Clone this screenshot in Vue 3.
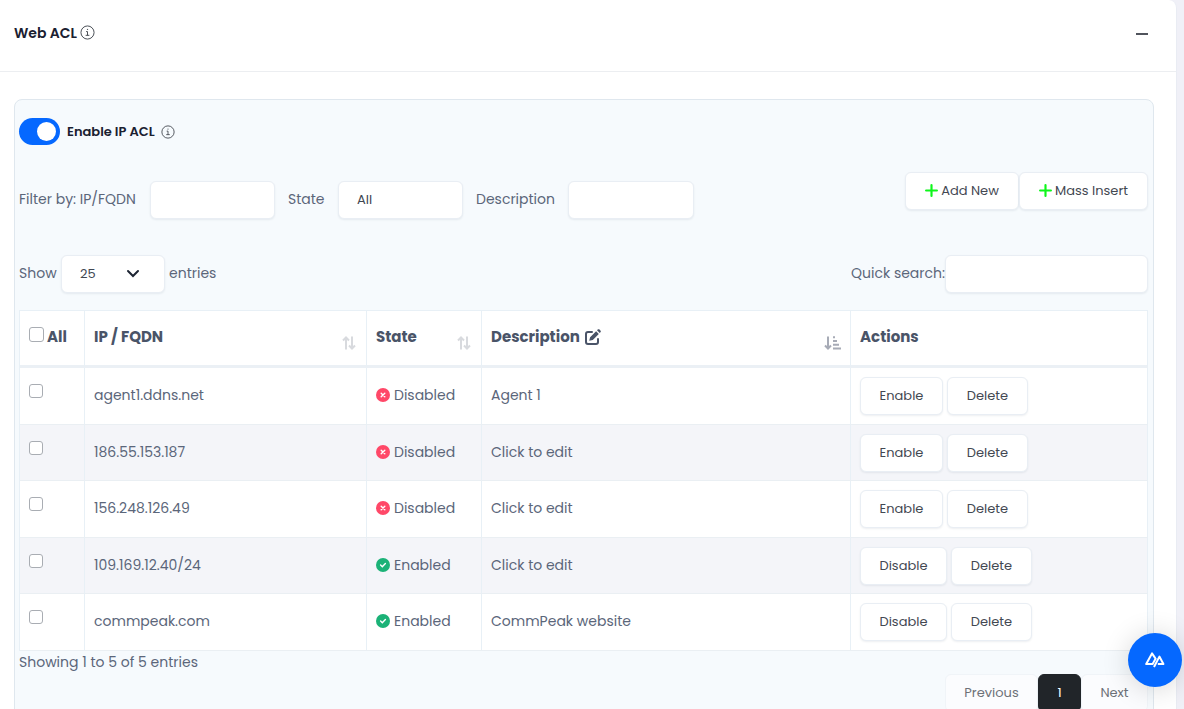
<script setup>
import { ref } from 'vue'

const aclEnabled = ref(true)
const pageSize = ref('25')
const filterIp = ref('')
const filterState = ref('All')
const filterDescription = ref('')
const quickSearch = ref('')
const selected = ref([])

const rows = [
  { ip: 'agent1.ddns.net', enabled: false, description: 'Agent 1' },
  { ip: '186.55.153.187', enabled: false, description: 'Click to edit' },
  { ip: '156.248.126.49', enabled: false, description: 'Click to edit' },
  { ip: '109.169.12.40/24', enabled: true, description: 'Click to edit' },
  { ip: 'commpeak.com', enabled: true, description: 'CommPeak website' },
]

function toggleAll(event) {
  selected.value = event.target.checked ? rows.map((row) => row.ip) : []
}
</script>

<template>
  <div class="page">
    <section class="card">
      <header class="card-head">
        <h1>Web ACL</h1>
        <svg class="info" viewBox="0 0 16 16" aria-hidden="true">
          <circle cx="8" cy="8" r="7" />
          <path d="M6.5 7H8v4M6 11h4M7.4 4.7h1.2" />
        </svg>
        <button class="collapse" type="button" aria-label="Collapse"><span></span></button>
      </header>

      <div class="card-body">
        <div class="panel">
          <div class="enable">
            <input id="acl" v-model="aclEnabled" class="switch" type="checkbox" role="switch" />
            <label for="acl">Enable IP ACL</label>
            <svg class="info small" viewBox="0 0 16 16" aria-hidden="true">
              <circle cx="8" cy="8" r="7" />
              <path d="M6.5 7H8v4M6 11h4M7.4 4.7h1.2" />
            </svg>
          </div>

          <div class="toolbar">
            <form class="filters" @submit.prevent>
              <label for="f-ip">Filter by: IP/FQDN</label>
              <input id="f-ip" v-model="filterIp" class="field" type="text" />
              <label for="f-state">State</label>
              <select id="f-state" v-model="filterState" class="field">
                <option>All</option>
                <option>Enabled</option>
                <option>Disabled</option>
              </select>
              <label for="f-desc">Description</label>
              <input id="f-desc" v-model="filterDescription" class="field" type="text" />
            </form>
            <div class="add-buttons">
              <button class="btn add" type="button">
                <svg class="plus" viewBox="0 0 12 12" aria-hidden="true"><path d="M6 1v10M1 6h10" /></svg>Add New
              </button>
              <button class="btn mass" type="button">
                <svg class="plus" viewBox="0 0 12 12" aria-hidden="true"><path d="M6 1v10M1 6h10" /></svg>Mass Insert
              </button>
            </div>
          </div>

          <div class="listing">
            <div class="length">
              <label for="size">Show</label>
              <span class="select-wrap">
                <select id="size" v-model="pageSize" class="field">
                  <option>10</option>
                  <option>25</option>
                  <option>50</option>
                </select>
                <svg class="chevron" viewBox="0 0 14 10" aria-hidden="true"><path d="M2 2l5 5 5-5" /></svg>
              </span>
              <span class="unit">entries</span>
            </div>
            <div class="search">
              <label for="quick">Quick search:</label>
              <input id="quick" v-model="quickSearch" class="field" type="search" />
            </div>
          </div>

          <table>
            <colgroup>
              <col class="c-check" />
              <col class="c-ip" />
              <col class="c-state" />
              <col />
              <col class="c-actions" />
            </colgroup>
            <thead>
              <tr>
                <th>
                  <div class="th">
                    <input id="all" class="check large" type="checkbox" @change="toggleAll" />
                    <label for="all">All</label>
                  </div>
                </th>
                <th>
                  <div class="th">
                    <span>IP / FQDN</span>
                    <svg class="sort" viewBox="0 0 14 14" aria-hidden="true">
                      <path d="M4 13.5V1.5M1 4.5l3-3 3 3M10 .5v12M7 9.5l3 3 3-3" />
                    </svg>
                  </div>
                </th>
                <th>
                  <div class="th">
                    <span>State</span>
                    <svg class="sort" viewBox="0 0 14 14" aria-hidden="true">
                      <path d="M4 13.5V1.5M1 4.5l3-3 3 3M10 .5v12M7 9.5l3 3 3-3" />
                    </svg>
                  </div>
                </th>
                <th>
                  <div class="th">
                    <span>Description</span>
                    <svg class="edit" viewBox="0 0 16 16" aria-hidden="true">
                      <path class="line" d="M7 3H3a2 2 0 0 0-2 2v8a2 2 0 0 0 2 2h8a2 2 0 0 0 2-2v-3" />
                      <path class="solid" d="M11.1 2.2l2.7 2.7-6 6-3.6.9.9-3.6zM12 1.3l.7-.7c.5-.6 1.3-.6 1.8 0l.9.9c.6.5.6 1.3 0 1.8l-.7.7z" />
                    </svg>
                    <svg class="sort active" viewBox="0 0 17 14" aria-hidden="true">
                      <path d="M4 .5v12M1 9.5l3 3 3-3M9 1.2h2M9 5h4M9 8.8h6M9 12.6h8" />
                    </svg>
                  </div>
                </th>
                <th><div class="th">Actions</div></th>
              </tr>
            </thead>
            <tbody>
              <tr v-for="row in rows" :key="row.ip">
                <td class="pick">
                  <input v-model="selected" class="check" type="checkbox" :value="row.ip" :aria-label="row.ip" />
                </td>
                <td>{{ row.ip }}</td>
                <td>
                  <div class="status">
                    <svg v-if="row.enabled" class="dot on" viewBox="0 0 14 14" aria-hidden="true">
                      <circle cx="7" cy="7" r="7" />
                      <path d="M4.6 7.1l1.7 1.6 3.1-3.2" />
                    </svg>
                    <svg v-else class="dot off" viewBox="0 0 14 14" aria-hidden="true">
                      <circle cx="7" cy="7" r="7" />
                      <path d="M5.2 5.2l3.6 3.6M8.8 5.2L5.2 8.8" />
                    </svg>
                    {{ row.enabled ? 'Enabled' : 'Disabled' }}
                  </div>
                </td>
                <td>{{ row.description }}</td>
                <td class="ops">
                  <div class="actions">
                    <button class="btn" :class="row.enabled ? 'disable' : 'enable-btn'" type="button">
                      {{ row.enabled ? 'Disable' : 'Enable' }}
                    </button>
                    <button class="btn delete" type="button">Delete</button>
                  </div>
                </td>
              </tr>
            </tbody>
          </table>

          <div class="summary">Showing 1 to 5 of 5 entries</div>
          <nav class="pager" aria-label="Pagination">
            <button class="btn prev" type="button" disabled>Previous</button>
            <button class="btn current" type="button" aria-current="page">1</button>
            <button class="btn next" type="button" disabled>Next</button>
          </nav>
        </div>
      </div>
    </section>

    <button class="fab" type="button" aria-label="Open assistant">
      <svg viewBox="0 0 20 16" aria-hidden="true">
        <path d="M9 15L14.4 4.6 18.4 12H12.8M10.4 6.4L7 1.4 1.2 12H7.6L11 6" />
      </svg>
    </button>
  </div>
</template>

<style>
body {
  margin: 0;
  background: #f0f0f7;
}
</style>

<style scoped>
.page,
.page * {
  box-sizing: border-box;
}

.page {
  height: 100vh;
  overflow: hidden;
  padding-right: 7px;
  font-family: Poppins, Inter, 'Open Sans', sans-serif;
  font-size: 14px;
  line-height: 20px;
  color: #5b667a;
  background: #f0f0f7;
}

button,
input,
select {
  margin: 0;
  font: inherit;
}

.card {
  background: #fff;
  border-right: 1px solid #e9ecf3;
  border-radius: 0 8px 8px 0;
}

.card-head {
  display: flex;
  align-items: center;
  gap: 3px;
  height: 72px;
  padding: 0 22px 6px 14px;
  border-bottom: 1px solid #eceef1;
}

h1 {
  margin: 0;
  font-size: 14px;
  font-weight: 600;
  color: #1a2030;
}

.info {
  width: 15px;
  height: 15px;
  fill: none;
  stroke: #40454d;
  stroke-width: 1;
}

.info.small {
  width: 14px;
  height: 14px;
}

.collapse {
  display: grid;
  place-items: center;
  width: 24px;
  height: 24px;
  margin-left: auto;
  padding: 2px 0 0;
  border: 0;
  background: none;
}

.collapse span {
  width: 12px;
  height: 2px;
  background: #50545c;
}

.card-body {
  padding: 27px 22px 28px 14px;
}

.panel {
  padding: 18px 5px 16px 4px;
  border: 1px solid #dfe7ee;
  border-radius: 8px;
  background: #f6fafd;
}

.enable {
  display: flex;
  align-items: center;
  gap: 6px;
  height: 27px;
  font-size: 13px;
  font-weight: 600;
  color: #1a2030;
}

.enable label {
  margin-left: 1px;
}

.switch {
  display: flex;
  align-items: center;
  justify-content: flex-end;
  appearance: none;
  width: 41px;
  height: 27px;
  padding: 4px;
  border-radius: 14px;
  background: #0568ff;
}

.switch:not(:checked) {
  justify-content: flex-start;
  background: #a9b4c4;
}

.switch::before {
  content: '';
  width: 19px;
  height: 19px;
  border-radius: 50%;
  background: #fff;
}

.toolbar {
  display: flex;
  align-items: flex-start;
  justify-content: space-between;
  margin-top: 27px;
}

.filters {
  display: grid;
  grid-template-columns: 118px 125px 37px 125px 79px 126px;
  align-items: center;
  gap: 13px;
  margin-top: 9px;
  white-space: nowrap;
}

.filters label,
.length label,
.search label,
.unit {
  padding-bottom: 2px;
}

.field {
  width: 100%;
  height: 38px;
  padding: 0 18px;
  appearance: none;
  border: 1px solid #e9eef4;
  border-radius: 6px;
  background: #fff;
  box-shadow: 0 1px 2px rgba(30, 50, 80, 0.08);
  color: #414752;
  font-size: 13px;
}

.btn {
  display: inline-flex;
  align-items: center;
  justify-content: center;
  height: 38px;
  padding: 0;
  border: 1px solid #e9eef4;
  border-radius: 6px;
  background: #fff;
  box-shadow: 0 1px 2px rgba(30, 50, 80, 0.08);
  color: #434852;
  font-size: 13px;
  white-space: nowrap;
}

.add-buttons {
  display: flex;
}

.add {
  width: 114px;
}

.mass {
  width: 129px;
}

.plus {
  width: 13px;
  height: 13px;
  margin: 0 3px 2px 0;
  fill: none;
  stroke: #0ef61b;
  stroke-width: 2;
  stroke-linecap: round;
}

.listing {
  display: flex;
  justify-content: space-between;
  margin: 36px 0 17px;
}

.length,
.search {
  display: flex;
  align-items: center;
}

.length {
  gap: 4px;
}

.length label {
  width: 38px;
}

.search .field {
  width: 203px;
}

.select-wrap {
  position: relative;
  width: 104px;
}

.chevron {
  position: absolute;
  top: 14px;
  right: 25px;
  width: 14px;
  height: 10px;
  fill: none;
  stroke: #1d2533;
  stroke-width: 2;
  stroke-linecap: round;
  pointer-events: none;
}

table {
  width: 100%;
  table-layout: fixed;
  border-collapse: separate;
  border-spacing: 0;
  border-top: 1px solid #e8f0f6;
  border-left: 1px solid #e8f0f6;
  background: #fff;
}

.c-check {
  width: 65px;
}

.c-ip {
  width: 25%;
}

.c-state {
  width: 115px;
}

.c-actions {
  width: 297px;
}

th,
td {
  padding: 0 9px;
  border-right: 1px solid #e8f0f6;
  border-bottom: 1px solid #eaeff3;
  text-align: left;
  white-space: nowrap;
}

th {
  height: 57px;
  border-bottom: 3px solid #ebf0f5;
  font-size: 15px;
  font-weight: 700;
  color: #4a5468;
}

td {
  height: 57px;
  padding-bottom: 2px;
}

tr:nth-child(even) td {
  height: 56px;
  background: #f4f5f9;
}

td.ops {
  padding-bottom: 0;
}

.th {
  display: flex;
  align-items: center;
  height: 54px;
  padding-bottom: 2px;
}

.check {
  display: block;
  appearance: none;
  width: 14px;
  height: 14px;
  border: 1px solid #a9adb3;
  border-radius: 3px;
  background: #fff;
}

.check:checked {
  border-color: #0568ff;
  background: #0568ff;
}

.check.large {
  width: 15px;
  height: 15px;
  margin: 0 3px 6px 0;
}

.pick {
  padding-top: 16px;
  vertical-align: top;
}

.sort {
  width: 14px;
  height: 14px;
  margin: 12px 1px 0 auto;
  fill: none;
  stroke: #d8dade;
  stroke-width: 2;
}

.sort.active {
  width: 17px;
  margin-right: 0;
  stroke: #a7abb6;
}

.edit {
  width: 16px;
  height: 16px;
  margin-left: 5px;
}

.edit .line {
  fill: none;
  stroke: #4a5468;
  stroke-width: 2;
  stroke-linecap: round;
}

.edit .solid {
  fill: #4a5468;
}

.status {
  display: flex;
  align-items: center;
  gap: 4px;
}

.dot {
  width: 14px;
  height: 14px;
}

.dot path {
  fill: none;
  stroke: #fff;
  stroke-width: 1.4;
  stroke-linecap: round;
}

.dot.on circle {
  fill: #1bb277;
}

.dot.off circle {
  fill: #ff4868;
}

.actions {
  display: flex;
  gap: 4px;
}

.enable-btn {
  width: 83px;
}

.disable {
  width: 87px;
}

.delete {
  width: 81px;
}

.summary {
  margin-top: 1px;
}

.pager {
  display: flex;
  justify-content: flex-end;
  margin-top: 2px;
}

.btn:disabled {
  background: #fbfcfe;
  box-shadow: none;
  border-color: #f0f4f8;
  color: #6d7178;
}

.prev {
  width: 93px;
}

.current {
  width: 43px;
  border-color: #212529;
  background: #212529;
  color: #fff;
}

.next {
  width: 67px;
}

.fab {
  position: fixed;
  right: 2px;
  bottom: 22px;
  display: grid;
  place-items: center;
  width: 54px;
  height: 54px;
  padding: 0;
  border: 0;
  border-radius: 50%;
  background: #0568ff;
  box-shadow: 0 2px 28px rgba(0, 0, 0, 0.16);
}

.fab svg {
  width: 20px;
  height: 16px;
  fill: none;
  stroke: #fff;
  stroke-width: 2;
  stroke-linejoin: round;
}
</style>
